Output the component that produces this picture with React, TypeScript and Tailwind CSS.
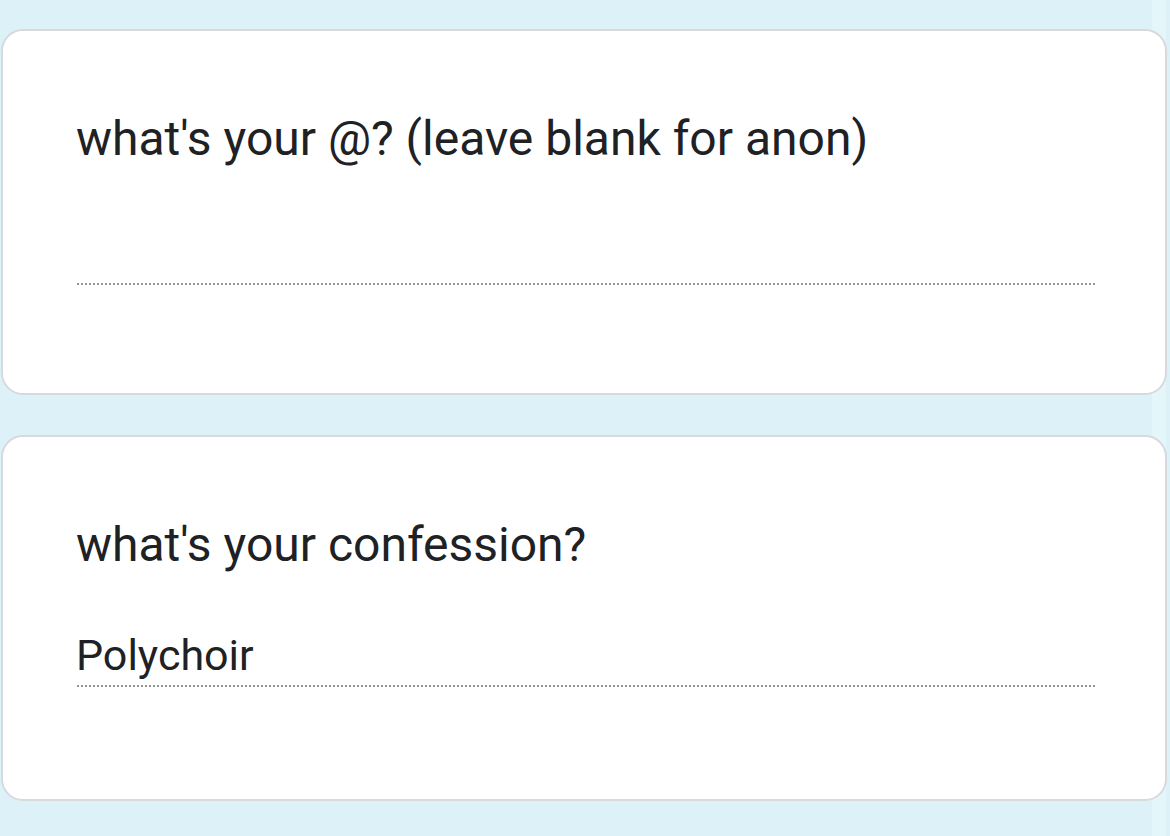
import React from "react";

const dotted =
  "h-[2px] w-full bg-[repeating-linear-gradient(to_right,#949494_0px,#949494_2px,transparent_2px,transparent_4px)]";

export default function App() {
  return (
    <div className="relative min-h-[836px] w-[1170px] bg-[#ddf2f8] pt-[29px] pl-[1px] pr-[3px] font-['Roboto',sans-serif] text-[#202124]">
      <div className="absolute top-0 bottom-0 left-[1152px] w-[14px] bg-[#e5f6fa]"></div>
      <div className="relative flex flex-col gap-[40px]">
        <div className="h-[366px] rounded-[22px] border-2 border-[#d7d9dd] bg-white pl-[74px] pr-[70px] pt-[80px]">
          <div className="-ml-[1px] text-[48px] leading-[56px]">what's your @? (leave blank for anon)</div>
          <div className="h-[116px]"></div>
          <div className={dotted}></div>
        </div>
        <div className="h-[366px] rounded-[22px] border-2 border-[#d7d9dd] bg-white pl-[74px] pr-[70px] pt-[80px]">
          <div className="-ml-[1px] text-[48px] leading-[56px]">what's your confession?</div>
          <div className="mt-[57px] -ml-[1px] text-[43px] leading-[50px]">Polychoir</div>
          <div className={`mt-[5px] ${dotted}`}></div>
        </div>
      </div>
    </div>
  );
}
